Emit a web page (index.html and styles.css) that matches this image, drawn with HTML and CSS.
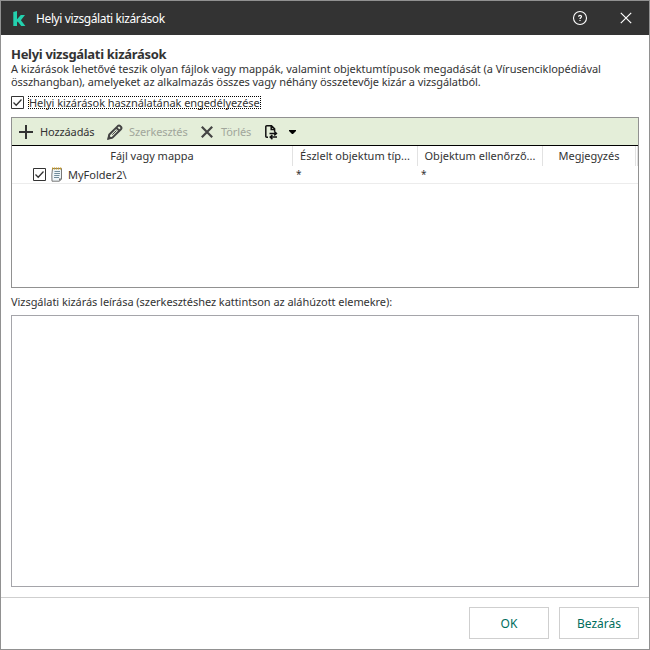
FILE: index.html
```html
<!DOCTYPE html>
<html lang="hu">
<head>
<meta charset="utf-8">
<title>Helyi vizsgálati kizárások</title>
<link rel="stylesheet" href="styles.css">
</head>
<body>
<div class="window">
  <header class="titlebar">
    <svg class="logo" width="14" height="16" viewBox="0 0 14 16"><path fill="#23d1ae" d="M.3 1 4 0V8.2L7.8 4H12L7.9 9.3 12.4 15H8.2L4.7 10.6 4 11.4V15H.3z"/></svg>
    <span class="caption">Helyi vizsgálati kizárások</span>
    <svg class="help" width="16" height="16" viewBox="0 0 16 16" fill="none" stroke="#fff"><circle cx="8" cy="8" r="6.5" stroke-width="1.1"/><path stroke-width="1.2" d="M6.6 6.7C6.6 5 9.5 5 9.5 6.6 9.5 7.7 8 7.7 8 9M8 9.9V11"/></svg>
    <svg class="close" width="12" height="12" viewBox="0 0 12 12" stroke="#fff" stroke-width="1.2"><path d="M.8.8 11.2 11.2M11.2.8.8 11.2"/></svg>
  </header>
  <main class="content">
    <h1 class="heading">Helyi vizsgálati kizárások</h1>
    <p class="intro"><span class="line-a">A kizárások lehetővé teszik olyan fájlok vagy mappák, valamint objektumtípusok megadását (a Vírusenciklopédiával</span><span class="line-b">összhangban), amelyeket az alkalmazás összes vagy néhány összetevője kizár a vizsgálatból.</span></p>
    <label class="enable">
      <svg width="13" height="13" viewBox="0 0 13 13" fill="none" stroke="#333"><path d="M.5.5H12.5V12.5H.5z"/><path stroke-width="1.3" d="M2.5 6.5 5.2 9.2 10.5 3.5"/></svg>
      <span class="focus">Helyi kizárások használatának engedélyezése</span>
    </label>
    <section class="list">
      <div class="toolbar">
        <svg width="14" height="14" viewBox="0 0 14 14" stroke="#333" stroke-width="2"><path d="M7 0V14M0 7H14"/></svg>
        <span class="add">Hozzáadás</span>
        <svg width="16" height="16" viewBox="0 0 16 16" fill="none" stroke="#444" stroke-width="2"><path d="M1.4 14.6 2.3 10.6 10.8 2.1Q12 1 13.2 2.1L13.9 2.8Q15 4 13.9 5.2L5.4 13.7zM9.2 3.6 12.4 6.8"/><path stroke-width="1" d="M5.3 10.7 9.5 6.5"/><path fill="#444" stroke="none" d="M.4 15.6 1.5 10.8 5.2 14.5z"/></svg>
        <span class="edit">Szerkesztés</span>
        <svg width="12" height="12" viewBox="0 0 12 12" stroke="#444" stroke-width="2.2"><path d="M.8.8 11.2 11.2M11.2.8.8 11.2"/></svg>
        <span class="delete">Törlés</span>
        <svg class="export" width="13" height="15" viewBox="0 0 13 15" fill="none" stroke="#111" stroke-width="1.5"><path d="M3 12.2H1.8Q.8 12.2.8 11.2V1.8Q.8.8 1.8.8H6.5L9.6 3.8V6M6.2.8V4.4H9.6M4.5 8.5H11.3M9.2 6.3 11.4 8.5 9.2 10.3M12 12H5.3M7.4 10 5.2 12 7.4 14.2"/></svg>
        <svg class="caret" width="7" height="4" viewBox="0 0 7 4"><path d="M0 0H7V1L4 4H3L0 1z"/></svg>
      </div>
      <div class="row head">
        <div class="cell"><span>Fájl vagy mappa</span></div>
        <div class="cell"><span>Észlelt objektum típ...</span></div>
        <div class="cell"><span>Objektum ellenőrző...</span></div>
        <div class="cell"><span>Megjegyzés</span></div>
        <div class="cell"></div>
      </div>
      <div class="row item">
        <div class="name">
          <svg width="13" height="13" viewBox="0 0 13 13" fill="none" stroke="#333"><path d="M.5.5H12.5V12.5H.5z"/><path stroke-width="1.3" d="M2.5 6.5 5.2 9.2 10.5 3.5"/></svg>
          <svg class="note" width="12" height="15" viewBox="0 0 12 15"><path fill="#eef5f8" stroke="#777" d="M1.5 1.5H10.5V12L8.5 14.2H1Q.4 8 1.5 1.5z"/><path stroke="#c79a24" stroke-width="1.8" stroke-dasharray="1.2 .8" d="M1 1.5H11"/><path stroke="#718c9b" d="M3.5 4.5H9M3.3 6.5H9M3.2 8.5H8.5M3 10.5H8"/><path fill="#777" d="M8 14V11.5H11z"/></svg>
          <span class="file">MyFolder2\</span>
        </div>
        <div class="star">*</div><div class="star">*</div><div></div><div></div>
      </div>
    </section>
    <p class="desc">Vizsgálati kizárás leírása (szerkesztéshez kattintson az aláhúzott elemekre):</p>
    <section class="details"></section>
  </main>
  <footer class="footer">
    <button class="button">OK</button>
    <button class="button">Bezárás</button>
  </footer>
</div>
</body>
</html>
```
FILE: styles.css
```css
* { box-sizing: border-box; }
body { margin: 0; font: 11px/13px "Noto Sans", sans-serif; color: #333; }
.window { width: 650px; height: 650px; border: 1px solid #919191; background: #fff; display: flex; flex-direction: column; white-space: nowrap; }
.titlebar { height: 34px; flex: none; background: #333; color: #fff; display: flex; align-items: center; padding: 0 17px 0 12px; font-size: 12px; }
.logo { margin-top: 1px; }
.caption { margin-left: 9px; letter-spacing: -.39px; }
.help { margin-left: auto; margin-right: 32px; }
.content { padding: 11px 10px 0; flex: 1; }
.heading { margin: 0; font-size: 13px; line-height: 16px; font-weight: 700; letter-spacing: -.31px; }
.intro { margin: 0; height: 27px; }
.line-a, .line-b { display: block; }
.line-a { letter-spacing: -.036px; }
.line-b { letter-spacing: -.07px; }
.enable { display: flex; align-items: center; height: 13px; margin-top: 7px; }
.focus { margin-left: 4px; outline: 1px dotted #000; outline-offset: -1px; width: 233px; height: 13px; line-height: 13px; padding-left: 1px; letter-spacing: -.06px; }
.list { margin-top: 8px; height: 171px; border: 1px solid #919191; }
.toolbar { height: 28px; background: #e4eed9; border-bottom: 1px solid #000; display: flex; align-items: center; padding-left: 7px; letter-spacing: -.12px; }
.add { margin-left: 7px; width: 67px; }
.edit { margin-left: 6px; width: 72px; }
.edit, .delete { color: #a1a69b; }
.delete { margin-left: 8px; width: 44px; }
.export { margin-top: 2px; }
.caret { margin-left: 11px; }
.row { display: grid; grid-template-columns: 281px 125px 125px 93px 2px; }
.head { height: 20px; }
.cell { border-right: 1px solid #e2e2e2; text-align: center; line-height: 20px; }
.item { height: 18px; border-bottom: 1px solid #ececec; }
.name { display: flex; align-items: center; padding-left: 21px; height: 16px; }
.note { margin-left: 5px; }
.file { margin-left: 5px; }
.star { padding-left: 3px; font-size: 10px; line-height: 17px; }
.desc { margin: 7px 0; line-height: 13px; letter-spacing: -.055px; }
.details { height: 272px; border: 1px solid #a5a5aa; }
.footer { height: 52px; flex: none; border-top: 1px solid #cfcfcf; display: flex; gap: 10px; justify-content: flex-end; padding: 9px 10px 0; }
.button { width: 80px; height: 32px; border: 1px solid #cfcfcf; background: #fff; color: #006d5c; font: 12px "Noto Sans", sans-serif; padding: 0; }
```
